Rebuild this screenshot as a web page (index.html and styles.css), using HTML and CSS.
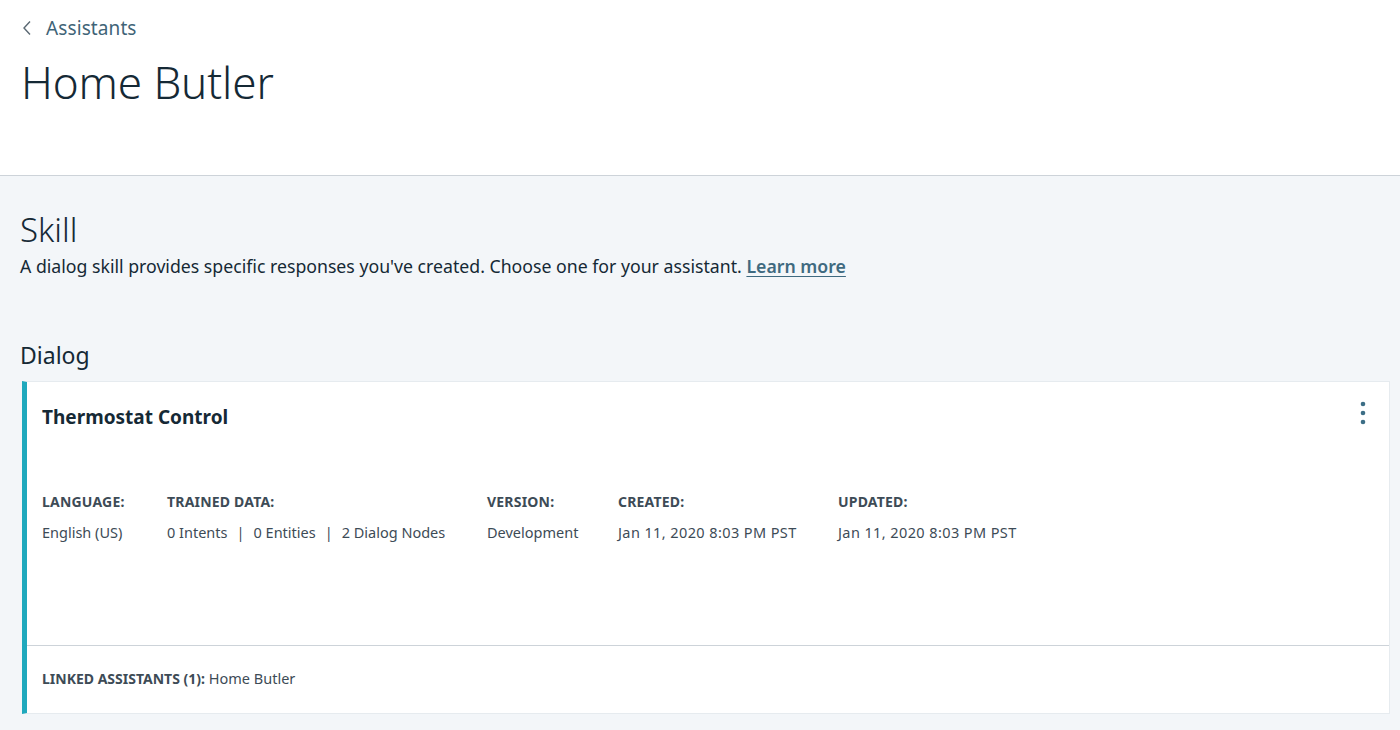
FILE: index.html
```html
<!DOCTYPE html>
<html>
<head>
<meta charset="utf-8">
<link rel="stylesheet" href="styles.css">
</head>
<body>
<header class="page-header">
  <a class="back-link" href="#">
    <svg class="chev" width="10" height="16" viewBox="0 0 10 16"><path d="M8 1.5 L2 8 L8 14.5" fill="none" stroke="#5a6872" stroke-width="1.4"/></svg>
    <span>Assistants</span>
  </a>
  <h1 class="title">Home Butler</h1>
</header>
<main class="content">
  <h2 class="section-title">Skill</h2>
  <p class="section-desc">A dialog skill provides specific responses you've created. Choose one for your assistant. <a href="#" class="learn">Learn more</a></p>
  <h3 class="sub-title">Dialog</h3>
  <section class="card">
    <div class="card-main">
      <div class="card-head">
        <h4 class="card-title">Thermostat Control</h4>
        <svg class="kebab" width="6" height="24" viewBox="0 0 6 24"><circle cx="3" cy="3" r="2.3" fill="#3c6e86"/><circle cx="3" cy="12" r="2.3" fill="#3c6e86"/><circle cx="3" cy="21" r="2.3" fill="#3c6e86"/></svg>
      </div>
      <div class="meta">
        <div class="meta-col c1">
          <div class="label">LANGUAGE:</div>
          <div class="value">English (US)</div>
        </div>
        <div class="meta-col c2">
          <div class="label">TRAINED DATA:</div>
          <div class="value">0 Intents<span class="sep">|</span>0 Entities<span class="sep">|</span>2 Dialog Nodes</div>
        </div>
        <div class="meta-col c3">
          <div class="label">VERSION:</div>
          <div class="value">Development</div>
        </div>
        <div class="meta-col c4">
          <div class="label">CREATED:</div>
          <div class="value date">Jan 11, 2020 8:03 PM PST</div>
        </div>
        <div class="meta-col c5">
          <div class="label">UPDATED:</div>
          <div class="value date">Jan 11, 2020 8:03 PM PST</div>
        </div>
      </div>
    </div>
    <div class="card-foot"><span class="label-inline">LINKED ASSISTANTS (1):</span> Home Butler</div>
  </section>
</main>
</body>
</html>
```

FILE: styles.css
```css
* { box-sizing: border-box; }
html, body { margin: 0; padding: 0; }
body {
  font-family: "Noto Sans", "Open Sans", sans-serif;
  color: #152935;
  background: #f3f6f9;
  width: 1400px;
  height: 730px;
  overflow: hidden;
}
.page-header {
  background: #ffffff;
  height: 176px;
  border-bottom: 1px solid #cdd3d9;
  padding: 14px 20px 0 22px;
}
.back-link {
  display: flex;
  align-items: center;
  gap: 14px;
  text-decoration: none;
  color: #3f6477;
  font-size: 19px;
  height: 28px;
}
.back-link span { letter-spacing: 0.1px; }
.title {
  margin: 14px 0 0 -1px;
  font-weight: 300;
  font-size: 44px;
  line-height: 52px;
  color: #152935;
  letter-spacing: -0.1px;
}
.content {
  padding: 32px 10px 0 20px;
}
.section-title {
  margin: 0;
  font-weight: 300;
  font-size: 33px;
  line-height: 44px;
  color: #152935;
}
.section-desc {
  margin: 0;
  font-size: 17.7px;
  line-height: 28px;
  color: #152935;
}
.learn {
  color: #3f6a80;
  font-weight: 600;
  text-decoration: underline;
  text-underline-offset: 3px;
}
.sub-title {
  margin: 59px 0 0 0;
  font-weight: 400;
  font-size: 23px;
  line-height: 32px;
  color: #152935;
}
.card {
  margin: 10px 0 0 2px;
  background: #fff;
  border: 1px solid #e6ebef;
  border-left: 5px solid #1fa9bd;
  height: 333px;
  display: flex;
  flex-direction: column;
}
.card-main {
  flex: 1;
  padding: 21px 20px 0 15px;
  border-bottom: 1px solid #cdd3d9;
}
.card-head {
  display: flex;
  justify-content: space-between;
  align-items: flex-start;
}
.card-title {
  margin: 0;
  font-size: 19px;
  font-weight: 700;
  line-height: 28px;
  color: #152935;
}
.kebab { margin-top: -2px; margin-right: 3px; }
.meta {
  display: flex;
  margin-top: 62px;
  font-size: 14.5px;
}
.meta-col { display: flex; flex-direction: column; gap: 12px; }
.c1 { width: 125px; }
.c2 { width: 320px; }
.c3 { width: 131px; }
.c4 { width: 220px; }
.label {
  font-weight: 700;
  color: #3d4b56;
  line-height: 18px;
  font-size: 14px;
  letter-spacing: 0.2px;
}
.value {
  color: #3d4b56;
  line-height: 18px;
}
.date { letter-spacing: 0.4px; }
.sep { margin: 0 9px; }
.card-foot {
  height: 67px;
  padding: 22px 15px 0;
  font-size: 14.5px;
  color: #3d4b56;
  line-height: 20px;
}
.label-inline { font-weight: 700; font-size: 14px; }
```
